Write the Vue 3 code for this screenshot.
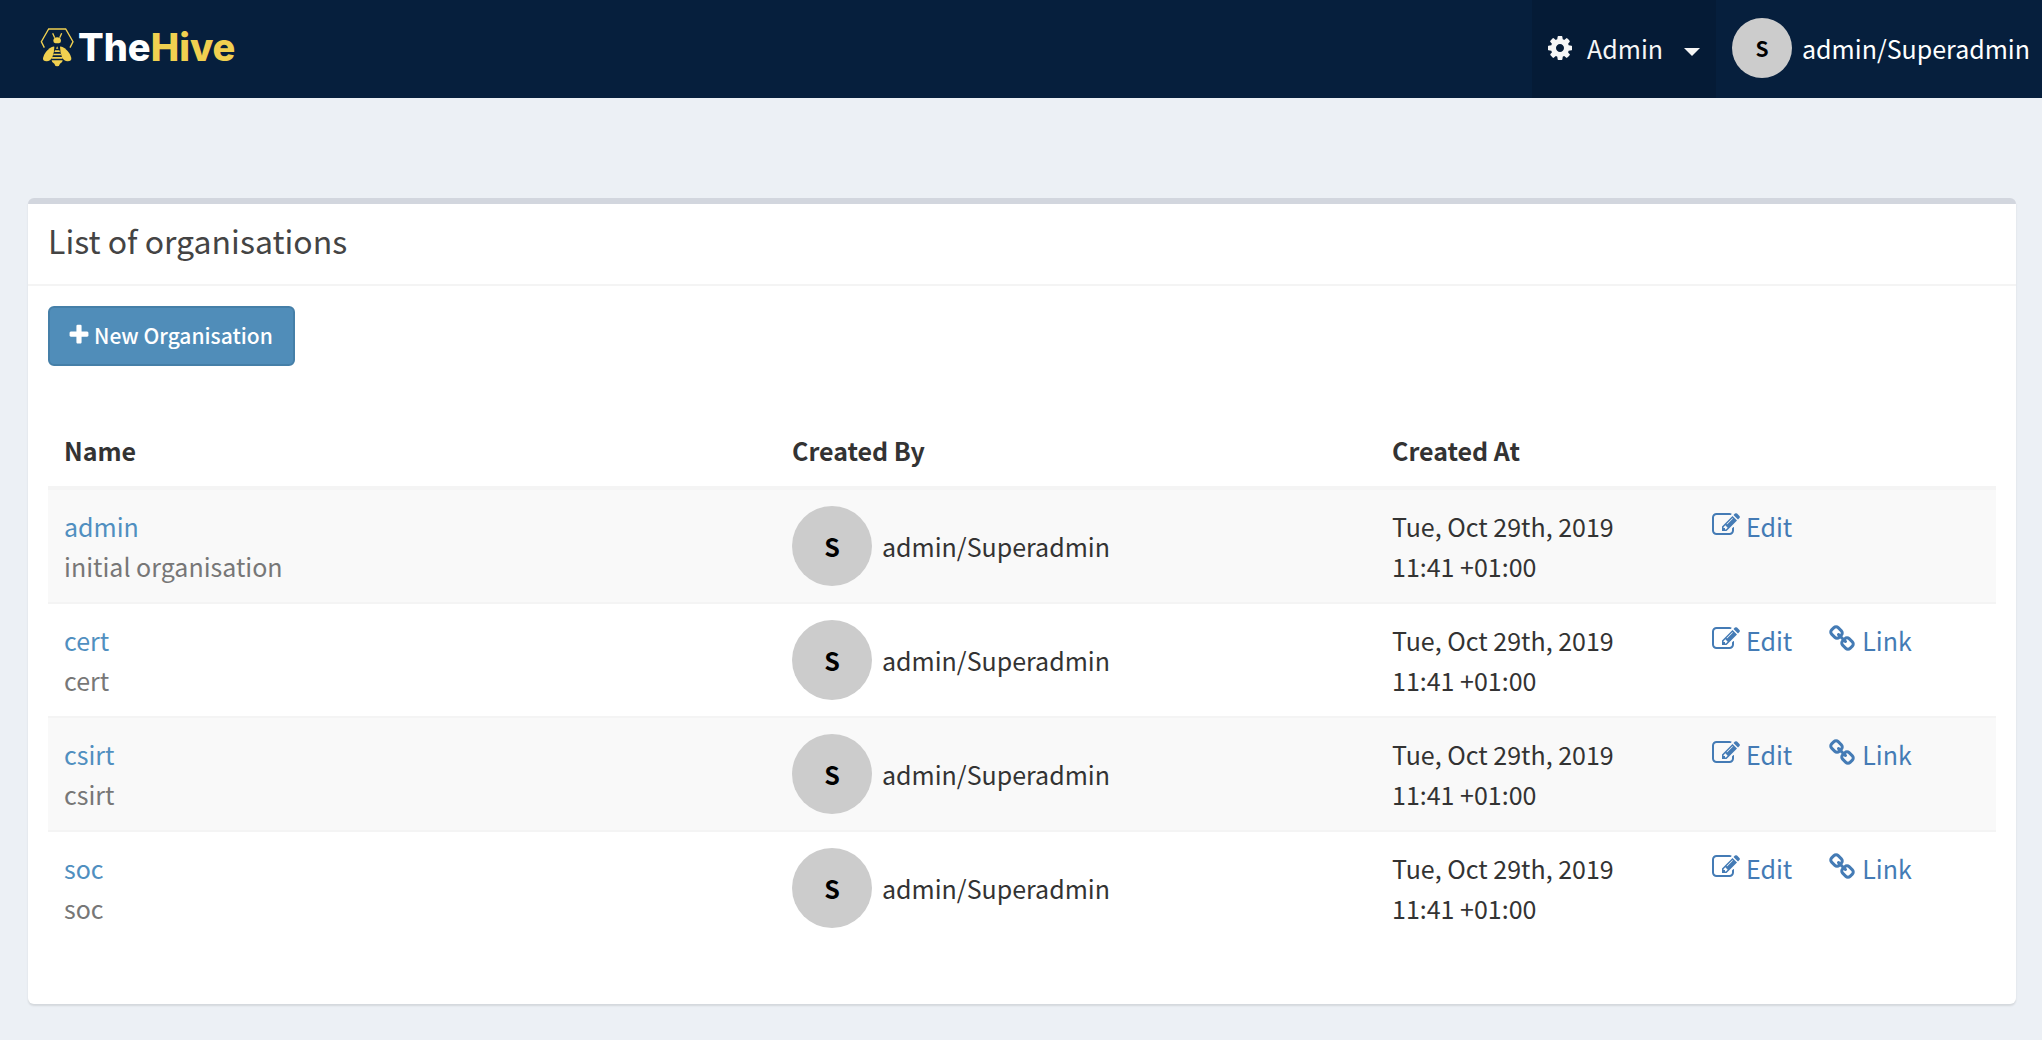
<script setup>
import { h } from 'vue'

const organisations = [
  { name: 'admin', description: 'initial organisation', linkable: false },
  { name: 'cert', description: 'cert', linkable: true },
  { name: 'csirt', description: 'csirt', linkable: true },
  { name: 'soc', description: 'soc', linkable: true },
]

const glyphs = {
  cog: 'M1152 896q0-106-75-181t-181-75-181 75-75 181 75 181 181 75 181-75 75-181zm512-109v222q0 12-8 23t-20 13l-185 28q-19 54-39 91 35 50 107 138 10 12 10 25t-9 23q-27 37-99 108t-94 71q-12 0-26-9l-138-108q-44 23-91 38-16 136-29 186-7 28-36 28h-222q-14 0-24.5-8.5t-11.5-21.5l-28-184q-49-16-90-37l-141 107q-10 9-25 9-14 0-25-11-126-114-165-168-7-10-7-23 0-12 8-23 15-21 51-66.5t54-70.5q-27-50-41-99l-183-27q-13-2-21-12.5t-8-23.5v-222q0-12 8-23t19-13l186-28q14-46 39-92-40-57-107-138-10-12-10-24 0-10 9-23 26-36 98.5-107.5t94.5-71.5q13 0 26 10l138 107q44-23 91-38 16-136 29-186 7-28 36-28h222q14 0 24.5 8.5t11.5 21.5l28 184q49 16 90 37l142-107q9-9 24-9 13 0 25 10 129 119 165 170 7 8 7 22 0 12-8 23-15 21-51 66.5t-54 70.5q26 50 41 98l183 28q13 2 21 12.5t8 23.5z',
  plus: 'M1600 736v192q0 40-28 68t-68 28h-416v416q0 40-28 68t-68 28h-192q-40 0-68-28t-28-68v-416h-416q-40 0-68-28t-28-68v-192q0-40 28-68t68-28h416v-416q0-40 28-68t68-28h192q40 0 68 28t28 68v416h416q40 0 68 28t28 68z',
  edit: 'M888 1184l116-116-152-152-116 116v56h96v96h56zm440-720q-16-16-33 1l-350 350q-17 17-1 33t33-1l350-350q17-17 1-33zm80 594v190q0 119-84.5 203.5t-203.5 84.5h-832q-119 0-203.5-84.5t-84.5-203.5v-832q0-119 84.5-203.5t203.5-84.5h832q63 0 117 25 15 7 18 23 3 17-9 29l-49 49q-14 14-32 8-23-6-45-6h-832q-66 0-113 47t-47 113v832q0 66 47 113t113 47h832q66 0 113-47t47-113v-126q0-13 9-22l64-64q15-15 35-7t20 29zm-96-738l288 288-672 672h-288v-288zm444 132l-92 92-288-288 92-92q28-28 68-28t68 28l152 152q28 28 28 68t-28 68z',
  link: 'M1520 1216q0-40-28-68l-208-208q-28-28-68-28-42 0-72 32 3 3 19 18.5t21.5 21.5 15 19 13 25.5 3.5 27.5q0 40-28 68t-68 28q-15 0-27.5-3.5t-25.5-13-19-15-21.5-21.5-18.5-19q-33 31-33 73 0 40 28 68l206 207q27 27 68 27 40 0 68-26l147-146q28-28 28-67zm-703-705q0-40-28-68l-206-207q-28-28-68-28-39 0-68 27l-147 146q-28 28-28 67 0 40 28 68l208 208q27 27 68 27 42 0 72-31-3-3-19-18.5t-21.5-21.5-15-19-13-25.5-3.5-27.5q0-40 28-68t68-28q15 0 27.5 3.5t25.5 13 19 15 21.5 21.5 18.5 19q33-31 33-73zm895 705q0 120-85 203l-147 146q-83 83-203 83-121 0-204-85l-206-207q-83-83-83-203 0-123 88-209l-88-88q-86 88-208 88-120 0-204-84l-208-208q-84-84-84-204t85-203l147-146q83-83 203-83 121 0 204 85l206 207q83 83 83 203 0 123-88 209l88 88q86-88 208-88 120 0 204 84l208 208q84 84 84 204z',
}

const Icon = (props) =>
  h('svg', { viewBox: '0 0 1792 1792', fill: 'currentColor', 'aria-hidden': 'true' }, [
    h('path', { d: glyphs[props.name] }),
  ])
Icon.props = ['name']
</script>

<template>
  <header class="navbar">
    <a class="brand" href="#">
      <svg class="bee" viewBox="12 21 102 120" aria-hidden="true">
        <path class="bee-line" d="M25 83L16 65L38 27H89L111 65L102 83" />
        <path class="bee-line" d="M50 40L56 53M77 40L71 53" />
        <path d="M52 62Q53 52 63.500 52Q74 52 75 62Q75 69 69 70H58Q52 69 52 62Z" />
        <path d="M55 80Q49 79 41 85Q24 99 21 114Q20 124 32 124Q43 124 49 112Q55 98 55 80Z" />
        <path d="M72 80Q78 79 86 85Q103 99 106 114Q107 124 95 124Q84 124 78 112Q72 98 72 80Z" />
        <path d="M60 86L63.500 79L67 86ZM57 91H70L72 96H55ZM53 101H74L76 106H51ZM49 111H78L80 116H47Z" />
        <path d="M47 121H80Q80 129 72 131Q70 139 63.500 139Q57 139 55 131Q47 129 47 121Z" />
      </svg>
      <span class="wordmark">The<b>Hive</b></span>
    </a>
    <nav class="menu">
      <button class="admin-menu" type="button">
        <Icon class="icon" name="cog" />
        <span>Admin</span>
        <span class="caret"></span>
      </button>
      <a class="account" href="#">
        <span class="avatar avatar-small">S</span>
        <span>admin/Superadmin</span>
      </a>
    </nav>
  </header>

  <main class="content">
    <section class="box">
      <h1 class="box-header">List of organisations</h1>
      <div class="box-body">
        <button class="new-button" type="button">
          <Icon class="plus" name="plus" />
          <span>New Organisation</span>
        </button>
        <table class="list">
          <thead>
            <tr>
              <th class="col-name">Name</th>
              <th class="col-by">Created By</th>
              <th class="col-at">Created At</th>
              <th class="col-actions"></th>
            </tr>
          </thead>
          <tbody>
            <tr v-for="org in organisations" :key="org.name">
              <td>
                <a class="org-name" href="#">{{ org.name }}</a>
                <div class="muted">{{ org.description }}</div>
              </td>
              <td>
                <div class="user">
                  <span class="avatar">S</span>
                  <span>admin/Superadmin</span>
                </div>
              </td>
              <td>Tue, Oct 29th, 2019<br />11:41 +01:00</td>
              <td>
                <div class="actions">
                  <a class="action" href="#"><Icon class="icon" name="edit" />Edit</a>
                  <a v-if="org.linkable" class="action" href="#"><Icon class="icon" name="link" />Link</a>
                </div>
              </td>
            </tr>
          </tbody>
        </table>
      </div>
    </section>
  </main>
</template>

<style>
body {
  margin: 0;
  background: #ecf0f5;
}
</style>

<style scoped>
.navbar,
.content,
.navbar button,
.content button {
  font-family: "Noto Sans CJK SC", "Noto Sans", sans-serif;
  font-size: 25px;
  line-height: 40px;
  color: #333;
}
a {
  text-decoration: none;
}
.icon {
  width: 28px;
  height: 28px;
  flex: none;
}

.navbar {
  display: flex;
  justify-content: space-between;
  min-height: 98px;
  background: #061f3d;
}
.brand {
  display: flex;
  align-items: center;
  gap: 4px;
  padding: 0 40px 4px;
}
.bee {
  width: 34px;
  height: 40px;
  fill: #f0d050;
}
.bee-line {
  fill: none;
  stroke: #f0d050;
  stroke-width: 4;
}
.wordmark {
  font-family: Inter, "Open Sans", sans-serif;
  font-size: 38px;
  font-weight: 800;
  color: #fff;
}
.wordmark b {
  font-weight: 800;
  color: #f0d050;
}
.menu {
  display: flex;
}
.navbar .admin-menu {
  display: flex;
  align-items: center;
  gap: 13px;
  padding: 0 16px 2px 14px;
  border: 0;
  background: #051b36;
  color: #f6f6f6;
}
.caret {
  margin: 8px 0 0 8px;
  border: 8px solid transparent;
  border-top-color: #f6f6f6;
  border-bottom: 0;
}
.account {
  display: flex;
  align-items: center;
  gap: 10px;
  padding: 0 12px 2px 16px;
  color: #fff;
}
.avatar {
  display: flex;
  align-items: center;
  justify-content: center;
  width: 80px;
  height: 80px;
  border-radius: 50%;
  background: #ccc;
  color: #000;
  font-weight: 700;
}
.avatar-small {
  width: 60px;
  height: 60px;
  font-size: 21px;
}

.content {
  padding: 100px 26px 36px 28px;
}
.box {
  border-top: 6px solid #d2d6de;
  border-radius: 6px;
  background: #fff;
  box-shadow: 0 2px 2px rgba(0, 0, 0, 0.1);
}
.box-header {
  margin: 0;
  padding: 16px 20px 24px;
  border-bottom: 2px solid #f4f4f4;
  font-size: 32px;
  font-weight: 400;
  line-height: 40px;
  color: #444;
}
.box-body {
  padding: 20px 20px 60px;
}
.content .new-button {
  display: flex;
  align-items: center;
  gap: 3px;
  height: 60px;
  padding: 0 20px 2px 17px;
  border: 2px solid #457fa8;
  border-radius: 6px;
  background: #508db9;
  color: #fff;
  font-size: 21px;
  font-weight: 500;
}
.plus {
  width: 24px;
  height: 24px;
}

.list {
  width: 100%;
  margin-top: 48px;
  border-spacing: 0;
  table-layout: fixed;
}
.col-by {
  width: 568px;
}
.col-at {
  width: 288px;
}
.col-actions {
  width: 268px;
}
th,
td {
  padding: 16px;
  text-align: left;
  vertical-align: top;
}
th {
  border-bottom: 4px solid #f4f4f4;
}
tbody tr:nth-child(odd) {
  background: #f9f9f9;
}
tbody tr + tr td {
  border-top: 2px solid #f4f4f4;
}
.org-name {
  color: #508fc0;
}
.muted {
  color: #777;
}
.user {
  display: flex;
  align-items: center;
  gap: 10px;
}
.actions {
  display: flex;
  gap: 36px;
}
.action {
  display: flex;
  align-items: center;
  gap: 6px;
  color: #447bb5;
}
.action .icon {
  margin-bottom: 2px;
}
</style>
